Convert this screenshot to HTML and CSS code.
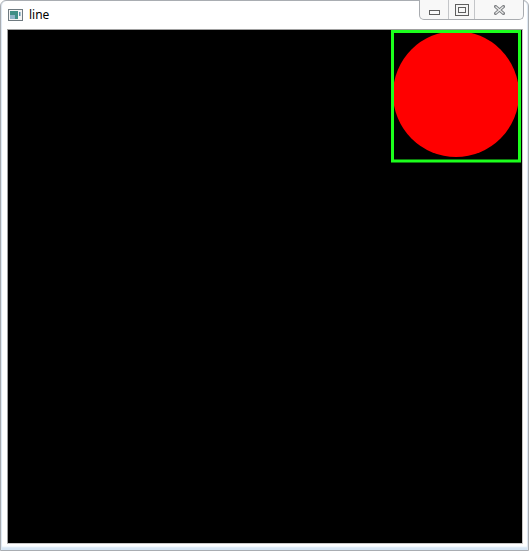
FILE: index.html
```html
<!DOCTYPE html>
<html>
<head>
<meta charset="utf-8">
<link rel="stylesheet" href="styles.css">
</head>
<body>
<div class="window">
  <div class="titlebar">
    <svg class="app-icon" width="15" height="12" viewBox="0 0 15 12">
      <rect x="0.5" y="0.5" width="14" height="11" fill="#f4f4f4" stroke="#6f7a80"/>
      <rect x="2" y="2" width="8" height="8" fill="#3f8f86"/>
      <rect x="2" y="6" width="5" height="4" fill="#8fb4c8"/>
      <rect x="11" y="3" width="1.5" height="4" fill="#5a8fa8"/>
    </svg>
    <span class="title">line</span>
    <div class="controls">
      <div class="btn btn-min"><span class="glyph-min"></span></div>
      <div class="btn btn-max"><span class="glyph-max"></span></div>
      <div class="btn btn-close">
        <svg width="11" height="10" viewBox="0 0 11 10">
          <path d="M1.5 1.5 L9.5 8.5 M9.5 1.5 L1.5 8.5" stroke="#7d7f82" stroke-width="3" stroke-linecap="square" fill="none"/>
          <path d="M1.5 1.5 L9.5 8.5 M9.5 1.5 L1.5 8.5" stroke="#eeeeee" stroke-width="1.1" fill="none"/>
        </svg>
      </div>
    </div>
  </div>
  <div class="frame">
    <div class="canvas">
      <svg class="drawing" width="514" height="513" viewBox="0 0 514 513">
        <circle cx="448" cy="64" r="63" fill="#ff0000"/>
        <rect x="384.5" y="1.5" width="127" height="129.5" fill="none" stroke="#1cff1c" stroke-width="3"/>
      </svg>
    </div>
  </div>
</div>
</body>
</html>
```

FILE: styles.css
```css
html, body {
  margin: 0;
  padding: 0;
  background: #ffffff;
}

.window {
  box-sizing: border-box;
  width: 529px;
  height: 551px;
  border: 1px solid #a9adb2;
  border-radius: 6px 6px 0 0;
  background: #ffffff;
  padding: 0 0 0 6px;
  box-shadow: inset 1px 0 0 #dfe8f2, inset -1px 0 0 #dfe8f2, inset 0 -3px 2px #d6e6f5;
  font-family: "Noto Sans", "Liberation Sans", sans-serif;
}

.titlebar {
  height: 28px;
  display: flex;
  align-items: flex-start;
  position: relative;
}

.app-icon {
  margin-top: 8px;
  margin-left: 1px;
}

.title {
  margin-left: 6px;
  margin-top: 6px;
  font-size: 12px;
  line-height: 16px;
  color: #000000;
}

.controls {
  position: absolute;
  top: -1px;
  right: 4px;
  display: flex;
  height: 20px;
  border: 1px solid #a9acb0;
  border-top: none;
  border-radius: 0 0 5px 5px;
  background: #f8f8f8;
  box-sizing: border-box;
}

.btn {
  display: flex;
  align-items: center;
  justify-content: center;
  height: 19px;
  box-sizing: border-box;
}

.btn-min {
  width: 29px;
  border-right: 1px solid #c4c6c9;
}

.btn-max {
  width: 26px;
  border-right: 1px solid #c4c6c9;
}

.btn-close {
  width: 48px;
}

.glyph-min {
  display: block;
  width: 9px;
  height: 3px;
  margin-top: 6px;
  border: 1px solid #5f5f5f;
  background: #fafafa;
}

.glyph-max {
  display: block;
  width: 6px;
  height: 4px;
  border: 1px solid #5f5f5f;
  box-shadow: 0 0 0 2px #f5f5f5, 0 0 0 3px #5f5f5f;
}

.frame {
  width: 514px;
  height: 513px;
  border: 1px solid #a0a0a0;
  border-right-color: #c8c8c8;
  border-bottom-color: #c8c8c8;
}

.canvas {
  width: 514px;
  height: 513px;
  background: #000000;
  overflow: hidden;
}

.drawing {
  display: block;
}
```
